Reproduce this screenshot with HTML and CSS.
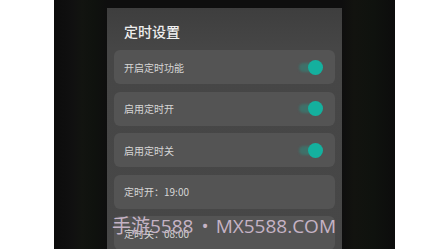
FILE: index.html
```html
<!DOCTYPE html>
<html lang="zh">
<head>
<meta charset="utf-8">
<link rel="stylesheet" href="styles.css">
</head>
<body>
<div class="screen">
  <div class="dialog">
    <div class="title">定时设置</div>
    <div class="list">
      <div class="row"><span>开启定时功能</span><span class="switch"><span class="track"></span><span class="knob"></span></span></div>
      <div class="row"><span>启用定时开</span><span class="switch"><span class="track"></span><span class="knob"></span></span></div>
      <div class="row"><span>启用定时关</span><span class="switch"><span class="track"></span><span class="knob"></span></span></div>
      <div class="row"><span>定时开：19:00</span></div>
      <div class="row"><span>定时关：08:00</span></div>
    </div>
  </div>
  <div class="watermark">手游5588<span class="dot">•</span>MX5588.COM</div>
</div>
</body>
</html>
```
FILE: styles.css
```css
html, body {
  margin: 0;
  padding: 0;
  background: #ffffff;
  overflow: hidden;
}
body {
  font-family: "Noto Sans CJK SC", "Noto Sans", sans-serif;
}
.screen {
  position: relative;
  margin-left: 54px;
  width: 341px;
  height: 249px;
  overflow: hidden;
  background: linear-gradient(90deg, #0c0c0c 0px, #101010 18px, #121410 28px, #0f120e 40px, #0e0e0e 53px, #0e0e0e 288px, #12130f 300px, #0f120e 320px, #0c0c0c 341px);
}
.dialog {
  margin-left: 53px;
  margin-top: 8px;
  width: 235px;
  height: 260px;
  background: linear-gradient(180deg, #3e3e3e 0px, #464646 40px, #474747 100%);
  padding-top: 13px;
  box-sizing: border-box;
}
.title {
  padding-left: 17px;
  font-size: 14px;
  line-height: 20px;
  color: #eeeeee;
  font-weight: 500;
}
.list {
  margin: 9px 7px 0;
  display: flex;
  flex-direction: column;
  gap: 7.5px;
}
.row {
  height: 34px;
  border-radius: 6px;
  background: #545454;
  display: flex;
  align-items: center;
  justify-content: space-between;
  padding: 0 12px 0 10px;
  font-size: 10px;
  color: #d6d6d6;
}
.switch {
  position: relative;
  width: 24px;
  height: 15px;
}
.track {
  position: absolute;
  left: 0;
  top: 3px;
  width: 20px;
  height: 9px;
  border-radius: 5px;
  background: #3f7069;
  filter: blur(1px);
}
.knob {
  position: absolute;
  right: 0;
  top: 0;
  width: 15px;
  height: 15px;
  border-radius: 50%;
  background: #14b09e;
}
.watermark {
  position: absolute;
  left: 58px;
  top: 214px;
  font-family: "Open Sans", "Noto Sans CJK SC", sans-serif;
  font-size: 19px;
  line-height: 24px;
  color: #c5b3c5;
  white-space: nowrap;
}
.dot {
  margin: 0 7px 0 8px;
}
```
